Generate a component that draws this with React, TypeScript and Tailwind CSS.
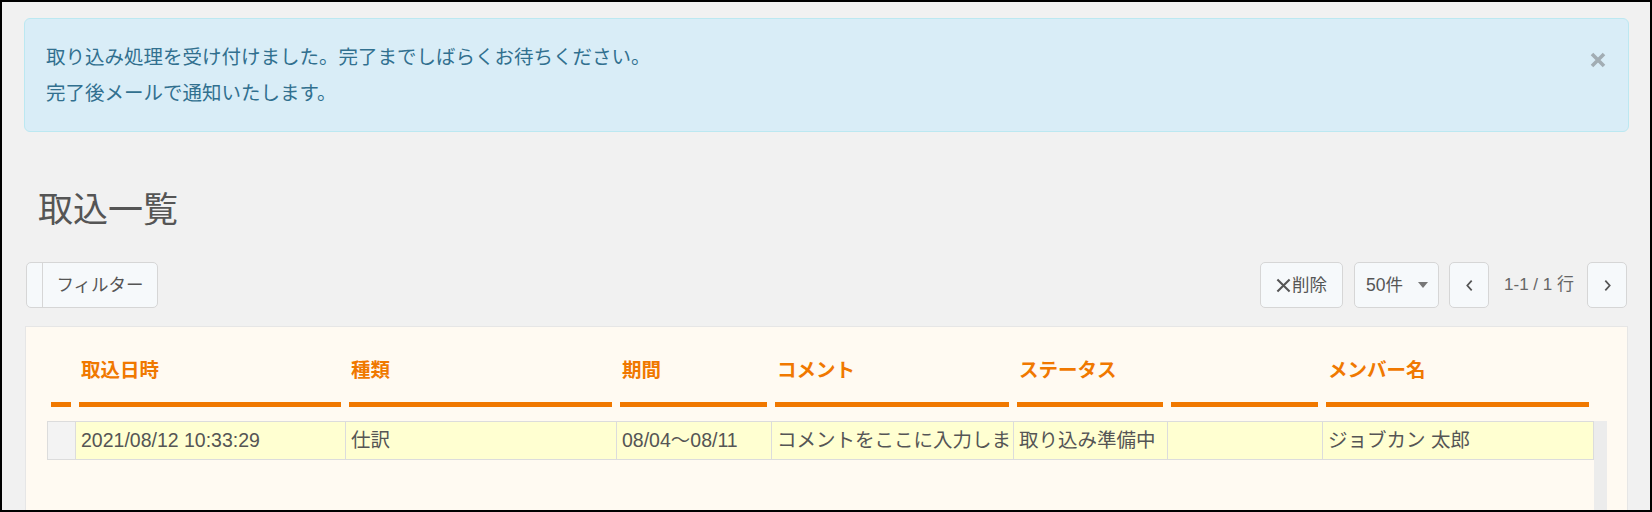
import React from 'react';

const headCols = [
  { w: 'w-[28px]', label: '' },
  { w: 'w-[270px]', label: '取込日時' },
  { w: 'w-[271px]', label: '種類' },
  { w: 'w-[155px]', label: '期間' },
  { w: 'w-[242px]', label: 'コメント' },
  { w: 'w-[154px]', label: 'ステータス' },
  { w: 'w-[155px]', label: '' },
  { w: 'w-[271px]', label: 'メンバー名' },
];

const rowCells = [
  { w: 'w-[28px]', text: '', first: true },
  { w: 'w-[270px]', text: '2021/08/12 10:33:29' },
  { w: 'w-[271px]', text: '仕訳' },
  { w: 'w-[155px]', text: '08/04～08/11' },
  { w: 'w-[242px]', text: 'コメントをここに入力しま' },
  { w: 'w-[154px]', text: '取り込み準備中' },
  { w: 'w-[155px]', text: '' },
  { w: 'w-[272px]', text: 'ジョブカン 太郎', last: true },
];

const btn = 'flex items-center justify-center h-[46px] rounded-[5px] border border-[#d6d6d6] bg-[#f6f9fb] text-[17.5px] text-[#555]';

const App: React.FC = () => {
  return (
    <div className="w-[1652px] h-[512px] overflow-hidden border-2 border-black bg-[#f1f1f1] font-['Liberation_Sans','Noto_Sans_CJK_JP',sans-serif]">
      <div className="pt-[16px] pl-[22px] pr-[21px]">
        {/* Info alert */}
        <div className="flex h-[114px] rounded-[6px] border border-[#bce8f1] bg-[#d9edf7] pl-[21px]">
          <div className="flex-1 pt-[20px] text-[19.5px] leading-[36px] text-[#31708f]">
            <p>取り込み処理を受け付けました。完了までしばらくお待ちください。</p>
            <p>完了後メールで通知いたします。</p>
          </div>
          <button className="mt-[33px] mr-[22px] h-[16px] w-[16px]">
            <svg viewBox="0 0 16 16" className="h-[16px] w-[16px]">
              <path d="M2 2 L14 14 M14 2 L2 14" stroke="#a2adb3" strokeWidth="3.6" />
            </svg>
          </button>
        </div>

        {/* Title */}
        <h1 className="mt-[54px] h-[48px] pl-[14px] text-[35px] leading-[48px] text-[#555]">取込一覧</h1>

        {/* Toolbar */}
        <div className="mt-[28px] flex h-[46px] justify-between px-[2px]">
          <div className="flex h-[46px] w-[132px] rounded-[5px] border border-[#d6d6d6] bg-[#f6f9fb] text-[17.5px] text-[#555]">
            <div className="w-[16px] border-r border-[#d6d6d6]" />
            <div className="flex flex-1 items-center justify-center">フィルター</div>
          </div>
          <div className="flex items-center">
            <button className={`${btn} w-[83px]`}>
              <svg viewBox="0 0 16 16" className="h-[15px] w-[15px]">
                <path d="M1.5 1.5 L14.5 14.5 M14.5 1.5 L1.5 14.5" stroke="#555" strokeWidth="2.2" />
              </svg>
              <span className="ml-[1px]">削除</span>
            </button>
            <button className={`${btn} ml-[11px] w-[85px] justify-start pl-[11px]`}>
              <span>50件</span>
              <svg viewBox="0 0 10 6" className="ml-[15px] h-[6px] w-[10px]">
                <path d="M0 0 L10 0 L5 6 Z" fill="#777" />
              </svg>
            </button>
            <button className={`${btn} ml-[10px] w-[40px]`}>
              <svg viewBox="0 0 8 14" className="h-[13px] w-[7px]">
                <path d="M6.5 1.5 L1.5 7 L6.5 12.5" stroke="#555" strokeWidth="2" fill="none" />
              </svg>
            </button>
            <span className="ml-[15px] text-[17px] text-[#666]">1-1 / 1 行</span>
            <button className={`${btn} ml-[13px] w-[40px]`}>
              <svg viewBox="0 0 8 14" className="h-[13px] w-[7px]">
                <path d="M1.5 1.5 L6.5 7 L1.5 12.5" stroke="#555" strokeWidth="2" fill="none" />
              </svg>
            </button>
          </div>
        </div>

        {/* Table panel */}
        <div className="mx-[1px] mt-[18px] h-[200px] border border-[#e6e6e6] bg-[#fffaf2] pl-[21px]">
          <div className="flex pt-[31px]">
            {headCols.map((c, i) => (
              <div key={i} className={`${c.w} px-[4px]`}>
                <div className="h-[24px] pl-[2px] text-[19.5px] font-bold leading-[24px] whitespace-nowrap text-[#f07800]">
                  {c.label}
                </div>
                <div className="mt-[20px] h-[5px] bg-[#f07800]" />
              </div>
            ))}
          </div>
          <div className="mt-[14px] flex h-[140px]">
            <div className="flex h-[39px] border-y border-[#dcdcdc] bg-[#ffffd1]">
              {rowCells.map((c, i) => (
                <div
                  key={i}
                  className={`${c.w} overflow-hidden whitespace-nowrap border-l border-[#dcdcdc] pl-[5px] text-[19.5px] leading-[37px] text-[#555] ${c.first ? 'bg-[#f3f3f3]' : ''} ${c.last ? 'border-r' : ''}`}
                >
                  {c.text}
                </div>
              ))}
            </div>
            <div className="w-[13px] bg-[#ececec]" />
          </div>
        </div>
      </div>
    </div>
  );
};

export default App;
